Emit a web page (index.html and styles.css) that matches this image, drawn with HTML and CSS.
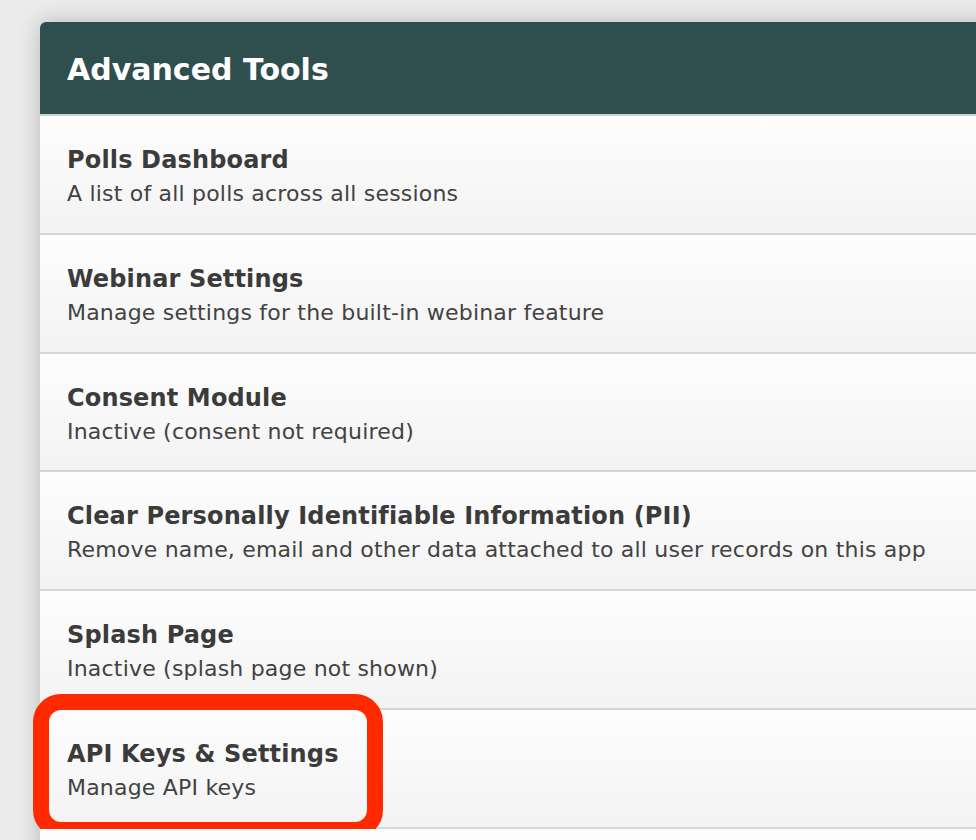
FILE: index.html
```html
<!DOCTYPE html>
<html>
<head>
<meta charset="utf-8">
<title>Advanced Tools</title>
<link rel="stylesheet" href="styles.css">
</head>
<body>
<div class="card">
  <div class="card-header">Advanced Tools</div>
  <div class="row">
    <div class="row-title">Polls Dashboard</div>
    <div class="row-sub">A list of all polls across all sessions</div>
  </div>
  <div class="row">
    <div class="row-title">Webinar Settings</div>
    <div class="row-sub">Manage settings for the built-in webinar feature</div>
  </div>
  <div class="row">
    <div class="row-title">Consent Module</div>
    <div class="row-sub">Inactive (consent not required)</div>
  </div>
  <div class="row">
    <div class="row-title">Clear Personally Identifiable Information (PII)</div>
    <div class="row-sub">Remove name, email and other data attached to all user records on this app</div>
  </div>
  <div class="row">
    <div class="row-title">Splash Page</div>
    <div class="row-sub">Inactive (splash page not shown)</div>
  </div>
  <div class="row row-highlighted">
    <div class="row-title">API Keys &amp; Settings</div>
    <div class="row-sub">Manage API keys</div>
    <div class="highlight"></div>
  </div>
  <div class="row">
    <div class="row-title">&nbsp;</div>
    <div class="row-sub">&nbsp;</div>
  </div>
</div>
</body>
</html>
```

FILE: styles.css
```css
html, body {
  margin: 0;
  padding: 0;
  height: 100%;
  overflow: hidden;
}

body {
  background: #ebebeb;
  font-family: "DejaVu Sans", "Liberation Sans", sans-serif;
}

.card {
  margin: 22px -60px 0 40px;
  border-radius: 6px 6px 0 0;
  box-shadow: 0 0 22px rgba(0, 0, 0, 0.22);
  background: #f7f7f7;
}

.card-header {
  height: 88px;
  line-height: 88px;
  padding: 4px 0 0 27px;
  background: #2f4f4f;
  color: #ffffff;
  font-size: 30px;
  font-weight: bold;
  border-radius: 6px 6px 0 0;
  border-bottom: 2px solid #cfd2d2;
}

.row {
  position: relative;
  height: 116.75px;
  box-sizing: content-box;
  padding-left: 27px;
  background: linear-gradient(#fdfdfd, #f3f3f3);
  border-bottom: 2px solid #d6d6d6;
}

.row-title {
  padding-top: 27px;
  font-size: 24px;
  line-height: 34px;
  letter-spacing: 0.15px;
  font-weight: bold;
  color: #3b3b3b;
  white-space: nowrap;
}

.row-sub {
  font-size: 22px;
  line-height: 33px;
  letter-spacing: 0.2px;
  color: #424242;
  white-space: nowrap;
}

.highlight {
  position: absolute;
  left: -7px;
  top: -16px;
  width: 350px;
  height: 144px;
  box-sizing: border-box;
  border: 16px solid #ff2a00;
  border-radius: 28px;
  pointer-events: none;
}
```
